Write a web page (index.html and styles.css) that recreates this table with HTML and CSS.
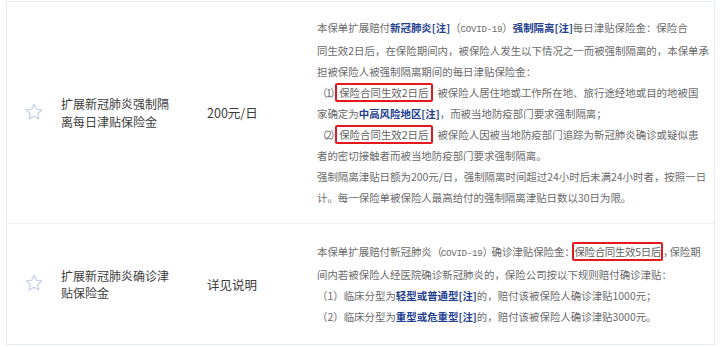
FILE: index.html
```html
<!DOCTYPE html>
<html lang="zh-CN">
<head>
<meta charset="utf-8">
<title>保障详情</title>
<link rel="stylesheet" href="styles.css">
</head>
<body>
<div class="table">
  <div class="row row-1">
    <div class="cell star-cell">
      <svg class="star" viewBox="0 0 24 24" width="20" height="20"><path d="M12 2.6l2.8 6.1 6.6.7-5 4.5 1.4 6.6L12 17.2l-5.8 3.3 1.4-6.6-5-4.5 6.6-.7z" fill="none" stroke="#c3cce6" stroke-width="1.4" stroke-linejoin="round"/></svg>
    </div>
    <div class="cell title">扩展新冠肺炎强制隔离每日津贴保险金</div>
    <div class="cell value">200元/日</div>
    <div class="cell desc">
      本保单扩展赔付<b class="link">新冠肺炎[注]</b>（<span class="latin">COVID-19</span>）<b class="link">强制隔离[注]</b>每日津贴保险金：保险合<br>
      同生效2日后，在保险期间内，被保险人发生以下情况之一而被强制隔离的，本保单承<br>
      担被保险人被强制隔离期间的每日津贴保险金：<br>
      <span class="tight">（1）</span><span class="mark mark-a">保险合同生效2日后</span><span class="tight">，</span>被保险人居住地或工作所在地、旅行途经地或目的地被国<br>
      家确定为<b class="link">中高风险地区[注]</b>，而被当地防疫部门要求强制隔离；<br>
      <span class="tight">（2）</span><span class="mark mark-a">保险合同生效2日后</span><span class="tight">，</span>被保险人因被当地防疫部门追踪为新冠肺炎确诊或疑似患<br>
      者的密切接触者而被当地防疫部门要求强制隔离。<br>
      强制隔离津贴日额为200元/日，强制隔离时间超过24小时后未满24小时者，按照一日<br>
      计。每一保险单被保险人最高给付的强制隔离津贴日数以30日为限。
    </div>
  </div>
  <div class="row row-2">
    <div class="cell star-cell">
      <svg class="star" viewBox="0 0 24 24" width="20" height="20"><path d="M12 2.6l2.8 6.1 6.6.7-5 4.5 1.4 6.6L12 17.2l-5.8 3.3 1.4-6.6-5-4.5 6.6-.7z" fill="none" stroke="#c3cce6" stroke-width="1.4" stroke-linejoin="round"/></svg>
    </div>
    <div class="cell title">扩展新冠肺炎确诊津贴保险金</div>
    <div class="cell value">详见说明</div>
    <div class="cell desc">
      本保单扩展赔付新冠肺炎<span class="tight">（<span class="latin">COVID-19</span>）</span>确诊津贴保险金<span class="tight">：</span><span class="mark mark-b">保险合同生效5日后</span><span class="tighter">，</span>保险期<br>
      间内若被保险人经医院确诊新冠肺炎的，保险公司按以下规则赔付确诊津贴：<br>
      （1）临床分型为<b class="link">轻型或普通型[注]</b>的，赔付该被保险人确诊津贴1000元；<br>
      （2）临床分型为<b class="link">重型或危重型[注]</b>的，赔付该被保险人确诊津贴3000元。
    </div>
  </div>
</div>
</body>
</html>
```

FILE: styles.css
```css
html, body {
  margin: 0;
  padding: 0;
  background: #ffffff;
}
body {
  padding: 1px 4px 3px 6px;
  font-family: "Noto Sans CJK SC", "Noto Sans", sans-serif;
}
.table {
  width: 709px;
  border: 1px solid #e6ebf3;
  border-right-color: #e3eaf5;
  box-sizing: border-box;
}
.row {
  display: grid;
  grid-template-columns: 54px 146px 93px 1fr;
  align-items: center;
}
.row-1 {
  height: 221px;
  border-bottom: 1px solid #eef0f5;
}
.row-2 {
  height: 120px;
}
.star-cell {
  display: flex;
  justify-content: center;
}
.star {
  display: block;
  margin-top: -2px;
}
.title {
  font-size: 12px;
  line-height: 17.5px;
  color: #3c3c3c;
  width: 110px;
}
.value {
  font-size: 12.5px;
  color: #3c3c3c;
}
.desc {
  padding: 0 4px 0 17px;
  font-size: 10.45px;
  line-height: 21px;
  color: #6a6a6a;
  white-space: nowrap;
  overflow: hidden;
}
.link {
  color: #243f8f;
  font-weight: 700;
}
.latin {
  font-family: "Liberation Mono", monospace;
  font-size: 9.2px;
  letter-spacing: -0.3px;
}
.tight {
  letter-spacing: -1.5px;
}
.tighter {
  letter-spacing: -4px;
}
.mark {
  display: inline-block;
  border: 2px solid #e3191e;
  border-radius: 2px;
  line-height: 15px;
  color: #5f5f5f;
  position: relative;
  background: #fff;
}
.mark-a {
  padding: 0 3px 0 2px;
  margin: 0 -5px 0 -4px;
}
.mark-b {
  padding: 0;
  letter-spacing: -0.3px;
  margin: 0 0 0 -1px;
}
```
